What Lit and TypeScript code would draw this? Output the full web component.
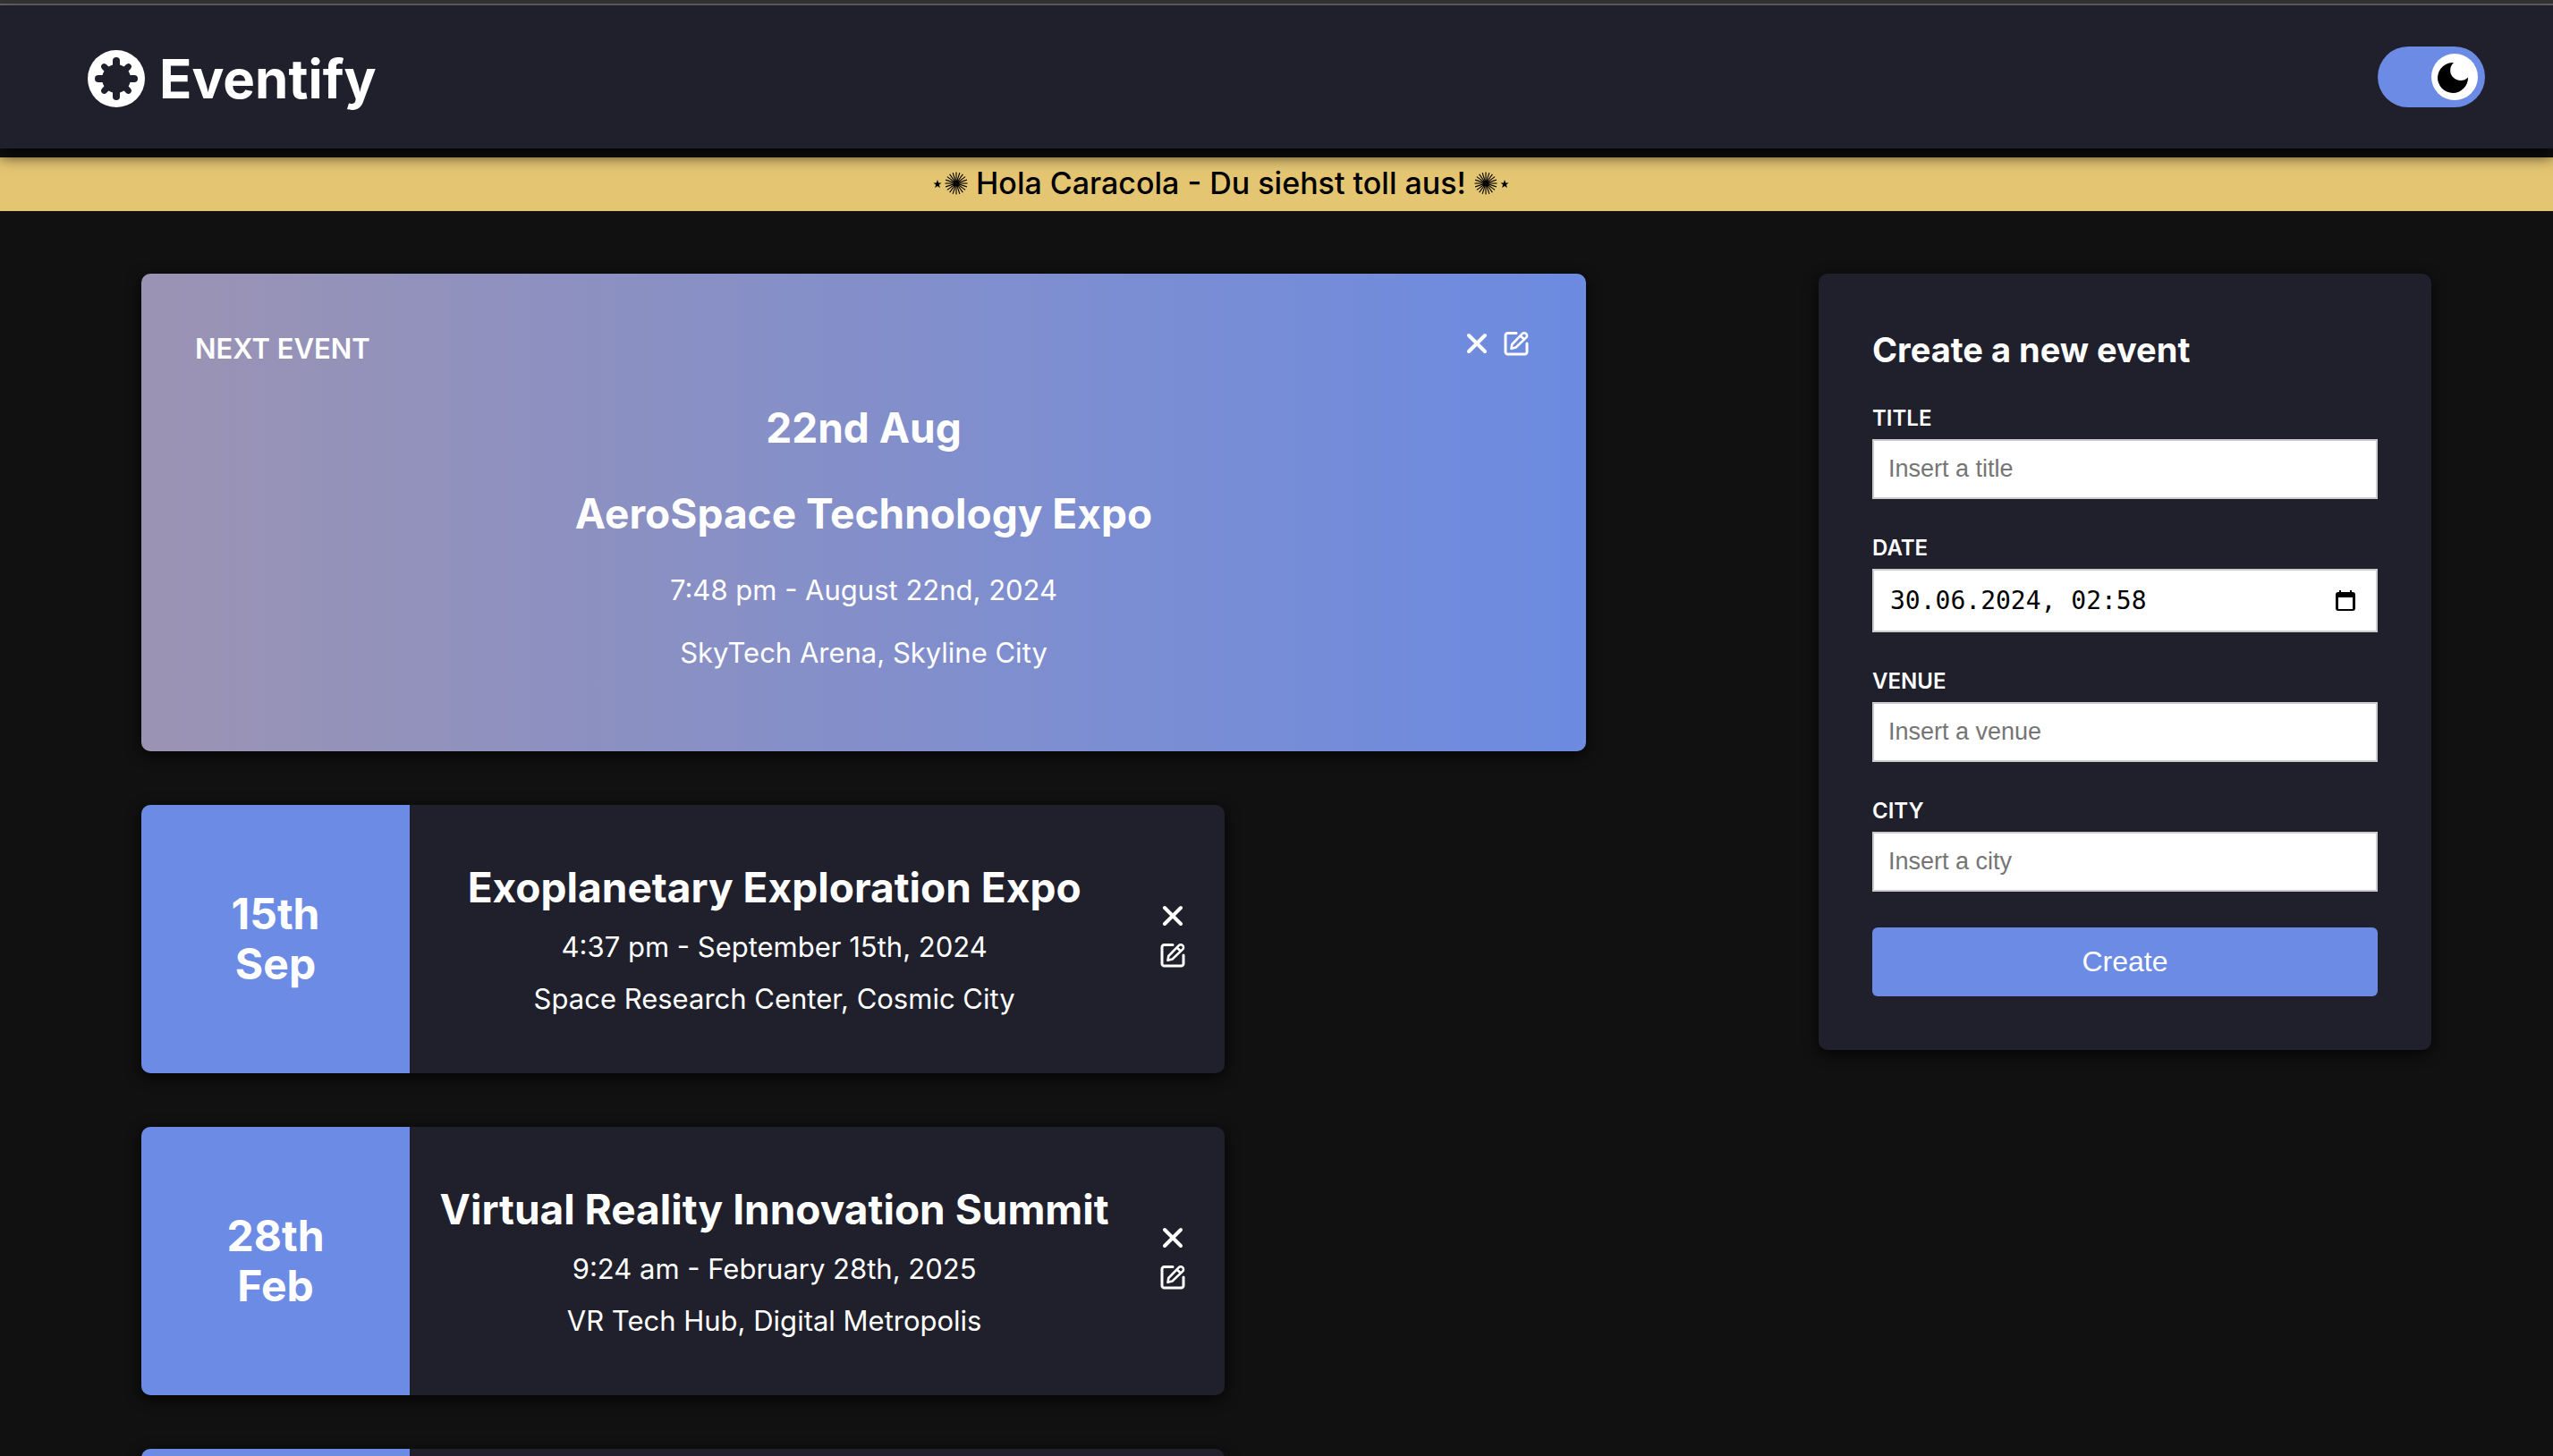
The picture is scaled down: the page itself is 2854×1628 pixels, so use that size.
import { LitElement, html, css, svg } from "lit";
import { customElement, property, state } from "lit/decorators.js";

interface EventItem {
  day: string;
  month: string;
  title: string;
  time: string;
  place: string;
}

const EVENTS: EventItem[] = [
  { day: "22nd", month: "Aug", title: "AeroSpace Technology Expo", time: "7:48 pm - August 22nd, 2024", place: "SkyTech Arena, Skyline City" },
  { day: "15th", month: "Sep", title: "Exoplanetary Exploration Expo", time: "4:37 pm - September 15th, 2024", place: "Space Research Center, Cosmic City" },
  { day: "28th", month: "Feb", title: "Virtual Reality Innovation Summit", time: "9:24 am - February 28th, 2025", place: "VR Tech Hub, Digital Metropolis" },
];

const closeIcon = html`<svg viewBox="0 0 28 28" width="28" height="28" fill="none" stroke="currentColor" stroke-width="4" stroke-linecap="round" aria-hidden="true">
  <path d="M5 5 23 23M23 5 5 23" />
</svg>`;

const editIcon = html`<svg viewBox="0 0 28 28" width="28" height="28" fill="none" stroke="currentColor" stroke-width="3" stroke-linejoin="round" stroke-linecap="round" aria-hidden="true">
  <path d="M14 2.500H4.500A2.500 2.500 0 0 0 2 5V23.500A2.500 2.500 0 0 0 4.500 26H23.500A2.500 2.500 0 0 0 26 23.500V14" />
  <path stroke-width="2.600" d="M8.500 19.800 9.300 15 20.800 3.200A2.900 2.900 0 0 1 25.200 7.400L13.500 18.500ZM18.800 5.500 22.800 9.500" />
</svg>`;

@customElement("event-actions")
class EventActions extends LitElement {
  static styles = css`
    :host { display: flex; gap: 16px; }
    :host([vertical]) { flex-direction: column; }
    .icon { display: block; padding: 0; border: 0; background: none; color: #fff; cursor: pointer; }
    .icon svg { display: block; }
  `;
  @property({ type: Boolean, reflect: true }) vertical = false;
  render() {
    return html`
      <button class="icon" type="button" aria-label="Delete event">${closeIcon}</button>
      <button class="icon" type="button" aria-label="Edit event">${editIcon}</button>
    `;
  }
}

@customElement("event-card")
class EventCard extends LitElement {
  static styles = css`
    :host {
      display: flex; width: 75%; min-height: 300px; overflow: hidden;
      border-radius: 10px; background: #201f2c; box-shadow: 0 4px 16px rgba(0, 0, 0, 0.8);
    }
    .date {
      flex: none; width: 300px; display: flex; flex-direction: column; justify-content: center;
      background: #6c8be4; text-align: center; font-size: 48px; line-height: 56px; font-weight: 700;
    }
    .info { flex: 1; display: flex; flex-direction: column; justify-content: center; gap: 18px; padding-top: 4px; text-align: center; }
    .title { margin: 0; padding-bottom: 4px; font-size: 46px; line-height: 50px; font-weight: 700; }
    .line { margin: 0; font-size: 31px; line-height: 40px; }
    .actions { align-self: center; padding: 0 44px 8px 24px; }
  `;
  @property({ attribute: false }) item!: EventItem;
  render() {
    const e = this.item;
    return html`
      <div class="date"><span>${e.day}</span><span>${e.month}</span></div>
      <div class="info">
        <h2 class="title">${e.title}</h2>
        <p class="line">${e.time}</p>
        <p class="line">${e.place}</p>
      </div>
      <event-actions class="actions" vertical></event-actions>
    `;
  }
}

@customElement("next-event")
class NextEvent extends LitElement {
  static styles = css`
    :host {
      display: block; box-sizing: border-box; padding: 60px; min-height: 534px; border-radius: 10px;
      background: linear-gradient(to right, #9b93b3, #6c8be1); box-shadow: 0 4px 16px rgba(0, 0, 0, 0.8);
      text-align: center;
    }
    .top { display: flex; justify-content: space-between; align-items: flex-start; }
    .tag { margin: 0; font-size: 31px; line-height: 48px; font-weight: 600; }
    .actions { padding: 4px 4px 0 0; }
    .big { margin: 0; font-size: 46px; line-height: 56px; font-weight: 700; }
    .line { margin: 0; font-size: 31px; line-height: 40px; }
    .body { display: flex; flex-direction: column; gap: 30px; padding-top: 36px; }
    .name { padding: 10px 0 8px; }
  `;
  @property({ attribute: false }) item!: EventItem;
  render() {
    const e = this.item;
    return html`
      <div class="top"><p class="tag">NEXT EVENT</p><event-actions class="actions"></event-actions></div>
      <div class="body">
        <p class="big">${e.day} ${e.month}</p>
        <h2 class="big name">${e.title}</h2>
        <p class="line">${e.time}</p>
        <p class="line">${e.place}</p>
      </div>
    `;
  }
}

@customElement("event-form")
class EventForm extends LitElement {
  static styles = css`
    :host {
      display: block; box-sizing: border-box; padding: 60px; border-radius: 10px;
      background: #201f2c; box-shadow: 0 4px 16px rgba(0, 0, 0, 0.8);
    }
    .heading { margin: 0 0 36px; font-size: 38px; line-height: 51px; font-weight: 700; }
    .form { display: flex; flex-direction: column; gap: 40px; }
    .field { display: flex; flex-direction: column; gap: 8px; }
    .label { font-size: 24px; line-height: 30px; font-weight: 600; }
    .input {
      box-sizing: border-box; width: 100%; height: 67px; padding: 0 16px; border: 2px solid #ccc; border-radius: 0;
      background: #fff; color: #000; font: 27px "Liberation Sans", Arial, sans-serif;
    }
    .input::placeholder { color: #757575; opacity: 1; }
    .datebox { display: flex; align-items: center; height: 71px; padding: 0 18px; }
    .date { flex: 1; min-width: 0; padding: 0; border: 0; outline: 0; background: none; color: #000; font: 28px "DejaVu Sans Mono", monospace; }
    .picker { display: block; padding: 0; border: 0; background: none; color: #000; }
    .picker svg { display: block; }
    .submit {
      height: 77px; border: 0; border-radius: 6px; background: #6c8be4; color: #fff;
      font: 32px "Liberation Sans", Arial, sans-serif; cursor: pointer;
    }
  `;
  private text(id: string, label: string, placeholder: string) {
    return html`<div class="field">
      <label class="label" for=${id}>${label}</label>
      <input class="input" id=${id} type="text" placeholder=${placeholder} />
    </div>`;
  }
  render() {
    return html`
      <h2 class="heading">Create a new event</h2>
      <form class="form" @submit=${(e: Event) => e.preventDefault()}>
        ${this.text("title", "TITLE", "Insert a title")}
        <div class="field">
          <label class="label" for="date">DATE</label>
          <div class="input datebox">
            <input class="date" id="date" type="text" value="30.06.2024, 02:58" />
            <button class="picker" type="button" aria-label="Open calendar">
              <svg viewBox="0 0 32 32" width="32" height="32" aria-hidden="true">
                <path fill="currentColor" fill-rule="evenodd" d="M9 4h2v2h10V4h2v2h1a3 3 0 0 1 3 3v15a3 3 0 0 1-3 3H8a3 3 0 0 1-3-3V9a3 3 0 0 1 3-3h1ZM8 12v13h16V12Z" />
              </svg>
            </button>
          </div>
        </div>
        ${this.text("venue", "VENUE", "Insert a venue")}
        ${this.text("city", "CITY", "Insert a city")}
        <button class="submit" type="submit">Create</button>
      </form>
    `;
  }
}

@customElement("app-root")
class AppRoot extends LitElement {
  static styles = css`
    :host {
      display: block; height: 100vh; overflow: hidden; background: #111; color: #fff;
      font-family: Inter, "Liberation Sans", sans-serif;
    }
    .strip { height: 4px; background: #353535; border-bottom: 2px solid #646464; }
    .header {
      position: relative; box-sizing: border-box; height: 160px; margin-bottom: 10px; padding: 0 76px 0 98px;
      display: flex; align-items: center; justify-content: space-between;
      background: #201f2c; box-shadow: 0 8px 16px rgba(0, 0, 0, 0.85);
    }
    .brand { display: flex; align-items: center; gap: 16px; padding-top: 4px; color: #fff; text-decoration: none; font-size: 60px; line-height: 76px; font-weight: 700; }
    .logo { display: block; }
    .toggle {
      appearance: none; box-sizing: border-box; width: 120px; height: 68px; margin: 0; padding: 8px;
      border-radius: 34px; background: #6c8be4; display: grid; cursor: pointer;
    }
    .switch { display: grid; align-items: center; }
    .switch > * { grid-area: 1 / 1; }
    .knob { justify-self: end; margin-right: 8px; pointer-events: none; }
    .banner {
      box-sizing: border-box; height: 60px; padding: 0 124px 2px 0; display: flex; justify-content: center; align-items: center; gap: 9px;
      background: #e4c572; color: #000; font-size: 34px; line-height: 44px; font-weight: 500;
    }
    .main { display: grid; grid-template-columns: 1615fr 685fr; column-gap: 260px; align-items: start; padding: 70px 136px 60px 158px; }
    .list { display: flex; flex-direction: column; gap: 60px; }
  `;
  @state() private dark = true;

  private spark(flip: boolean) {
    const rays = Array.from({ length: 20 }, (_, i) => svg`<path d="M27 18V5.500" transform="rotate(${i * 18} 27 18)" />`);
    return html`<svg width="40" height="36" viewBox="0 0 40 36" aria-hidden="true">
      <g transform=${flip ? "translate(40 0) scale(-1 1)" : ""}>
        <path d="M6 14 7.200 17.400H10.500L7.900 19.500 8.800 23 6 21 3.200 23 4.100 19.500 1.500 17.400H4.800Z" />
        <g stroke="#000" stroke-width="1.100">${rays}</g><circle cx="27" cy="18" r="3.500" />
      </g>
    </svg>`;
  }

  render() {
    const petals = Array.from({ length: 4 }, (_, i) => svg`<rect x=${i % 2 ? 28.5 : 28} y=${i % 2 ? 9.5 : 8} width=${i % 2 ? 7 : 8} height=${i % 2 ? 45 : 48} rx="4" transform="rotate(${i * 45} 32 32)" />`);
    return html`
      <div class="strip"></div>
      <header class="header">
        <a class="brand" href="#">
          <svg class="logo" width="64" height="64" viewBox="0 0 64 64" aria-hidden="true">
            <circle cx="32" cy="32" r="32" fill="#fff" />
            <g fill="#201f2c"><circle cx="32" cy="32" r="16" />${petals}</g>
          </svg>
          <span>Eventify</span>
        </a>
        <div class="switch">
          <input class="toggle" type="checkbox" aria-label="Dark mode" .checked=${this.dark}
            @change=${(e: Event) => { this.dark = (e.target as HTMLInputElement).checked; }} />
          <svg class="knob" width="52" height="52" viewBox="0 0 52 52" aria-hidden="true">
            <circle cx="26" cy="26" r="26" fill="#fff" />
            <path d="M25 10A17 17 0 1 0 41 26.500A11.500 11.500 0 1 1 25 10Z" />
          </svg>
        </div>
      </header>
      <div class="banner">${this.spark(false)}<span>Hola Caracola - Du siehst toll aus!</span>${this.spark(true)}</div>
      <main class="main">
        <section class="list">
          <next-event .item=${EVENTS[0]}></next-event>
          ${EVENTS.slice(1).map((e) => html`<event-card .item=${e}></event-card>`)}
          <event-card .item=${{ day: "", month: "", title: "", time: "", place: "" }}></event-card>
        </section>
        <event-form></event-form>
      </main>
    `;
  }
}
